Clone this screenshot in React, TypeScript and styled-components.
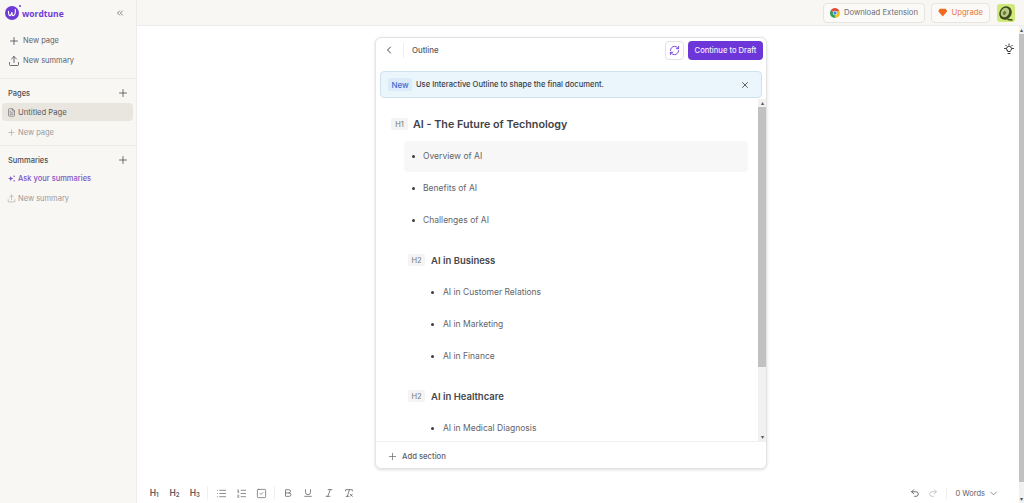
import { ChevronLeft, ChevronDown, ChevronsLeft, Plus, Upload, FileText, RefreshCw, X, Undo2, Redo2, List, ListOrdered, SquareCheck, Bold, Underline, Italic, RemoveFormatting } from "lucide-react";
import styled, { createGlobalStyle } from "styled-components";

const GlobalStyle = createGlobalStyle`
    html, body {
        margin: 0;
        height: 100%;
        overflow: hidden;
    }

    body {
        font-family: Inter, "Liberation Sans", sans-serif;
        background: #ffffff;
    }

    #root {
        height: 100%;
    }
`;

const outlineItems = [
    { kind: "li", level: 1, text: "Overview of AI", active: true },
    { kind: "li", level: 1, text: "Benefits of AI" },
    { kind: "li", level: 1, text: "Challenges of AI" },
    { kind: "h2", text: "AI in Business" },
    { kind: "li", level: 2, text: "AI in Customer Relations" },
    { kind: "li", level: 2, text: "AI in Marketing" },
    { kind: "li", level: 2, text: "AI in Finance" },
    { kind: "h2", text: "AI in Healthcare" },
    { kind: "li", level: 2, text: "AI in Medical Diagnosis" },
];

const App = () => {
    return (
        <Page>
            <GlobalStyle />
            <Sidebar>
                <LogoRow>
                    <Logo>
                        <svg width="14" height="14" viewBox="0 0 16 16">
                            <circle cx="8" cy="8" r="8" fill="#6f3bd8" />
                            <path d="M4 6c0 3 .6 5 1.700 5S7.500 9 8 7c-.2 2 .2 4 1.400 4 1.700 0 2.800-3 2.400-7" fill="none" stroke="#fff" strokeWidth="1.300" strokeLinecap="round" />
                        </svg>
                        <LogoDot />
                        <LogoText>wordtune</LogoText>
                    </Logo>
                    <ChevronsLeft size={10} color="#6b6b6b" />
                </LogoRow>

                <SideGroup>
                    <SideAction><Plus size={12} strokeWidth={1.5} />New page</SideAction>
                    <SideAction><Upload size={12} strokeWidth={1.5} />New summary</SideAction>
                </SideGroup>

                <SideSection>
                    <SideHeading>Pages<Plus size={12} strokeWidth={1.5} color="#444" /></SideHeading>
                    <PageItem><FileText size={9} strokeWidth={1.5} />Untitled Page</PageItem>
                    <SideLink><Plus size={9} strokeWidth={1.5} />New page</SideLink>
                </SideSection>

                <SideSection>
                    <SideHeading>Summaries<Plus size={12} strokeWidth={1.5} color="#444" /></SideHeading>
                    <AskLink>
                        <svg width="9" height="9" viewBox="0 0 12 12" fill="#7d55c7">
                            <path d="M5 2.500 6 5l2.500 1L6 7 5 9.500 4 7 1.500 6 4 5z" />
                            <circle cx="9.500" cy="3" r="1" />
                            <circle cx="9.500" cy="9" r="1" />
                        </svg>
                        Ask your summaries
                    </AskLink>
                    <SideLink><Upload size={9} strokeWidth={1.5} />New summary</SideLink>
                </SideSection>
            </Sidebar>

            <Main>
                <TopBar>
                    <ExtensionButton>
                        <ChromeIcon />
                        Download Extension
                    </ExtensionButton>
                    <UpgradeButton>
                        <svg width="10" height="9" viewBox="0 0 11 10">
                            <path d="M2 .5h7l1.700 3-5.200 6.100L.3 3.500z" fill="#ee6a1f" />
                        </svg>
                        Upgrade
                    </UpgradeButton>
                    <Avatar>
                        <svg width="16" height="16" viewBox="0 0 16 16">
                            <path d="M10 14.500 14 15" stroke="#3c4a1c" strokeWidth="1.500" strokeLinecap="round" />
                            <ellipse cx="7.500" cy="8" rx="6" ry="7" transform="rotate(30 7.500 8)" fill="#3c4a1c" />
                            <ellipse cx="7" cy="7.500" rx="4" ry="5" transform="rotate(30 7 7.500)" fill="#b9c98a" />
                            <ellipse cx="6.500" cy="8" rx="1.500" ry="2" transform="rotate(30 6.500 8)" fill="#6b7d2c" />
                        </svg>
                    </Avatar>
                </TopBar>

                <Workspace>
                    <Column>
                        <Editor>
                            <Canvas>
                                <Panel>
                                    <PanelHeader>
                                        <BackButton><ChevronLeft size={12} strokeWidth={2} /></BackButton>
                                        <PanelTitle>Outline</PanelTitle>
                                        <RefreshButton><RefreshCw size={11} strokeWidth={2} /></RefreshButton>
                                        <ContinueButton>Continue to Draft</ContinueButton>
                                    </PanelHeader>

                                    <Banner>
                                        <NewTag>New</NewTag>
                                        <BannerText>Use Interactive Outline to shape the final document.</BannerText>
                                        <X size={10} strokeWidth={2} color="#444" />
                                    </Banner>

                                    <OutlineScroll>
                                        <OutlineBody>
                                            <H1Row>
                                                <LevelTag>H1</LevelTag>
                                                <H1Text>AI - The Future of Technology</H1Text>
                                            </H1Row>
                                            {outlineItems.map((item) =>
                                                item.kind === "h2" ? (
                                                    <H2Row key={item.text}>
                                                        <LevelTag>H2</LevelTag>
                                                        <H2Text>{item.text}</H2Text>
                                                    </H2Row>
                                                ) : (
                                                    <Bullet key={item.text} $level={item.level ?? 1} $active={item.active}>
                                                        {item.text}
                                                    </Bullet>
                                                )
                                            )}
                                        </OutlineBody>
                                        <Scrollbar $width={8}>
                                            <ScrollArrow>▴</ScrollArrow>
                                            <ScrollTrack><ScrollThumb $height={260} /></ScrollTrack>
                                            <ScrollArrow>▾</ScrollArrow>
                                        </Scrollbar>
                                    </OutlineScroll>

                                    <PanelFooter>
                                        <Plus size={11} strokeWidth={1.5} />
                                        Add section
                                    </PanelFooter>
                                </Panel>
                            </Canvas>
                            <HintIcon>
                                <svg width="12" height="12" viewBox="0 0 24 24" fill="none" stroke="#333" strokeWidth="2" strokeLinecap="round">
                                    <path d="M8.500 15a5 5 0 1 1 7 0c-.7.700-1 1.300-1 2h-5c0-.7-.3-1.300-1-2z" />
                                    <path d="M10 21h4M12 2v2M3 11h2M19 11h2M5.500 4.500 7 6M18.500 4.500 17 6" />
                                </svg>
                            </HintIcon>
                        </Editor>

                        <BottomBar>
                            <ToolGroup>
                                <Tool><HeadingMark>H<sub>1</sub></HeadingMark></Tool>
                                <Tool><HeadingMark>H<sub>2</sub></HeadingMark></Tool>
                                <Tool><HeadingMark>H<sub>3</sub></HeadingMark></Tool>
                            </ToolGroup>
                            <ToolGroup>
                                <Tool><List size={11} strokeWidth={1.5} /></Tool>
                                <Tool><ListOrdered size={11} strokeWidth={1.5} /></Tool>
                                <Tool><SquareCheck size={11} strokeWidth={1.5} /></Tool>
                            </ToolGroup>
                            <ToolGroup>
                                <Tool><Bold size={10} strokeWidth={1.8} /></Tool>
                                <Tool><Underline size={10} strokeWidth={1.8} /></Tool>
                                <Tool><Italic size={10} strokeWidth={1.8} /></Tool>
                                <Tool><RemoveFormatting size={10} strokeWidth={1.8} /></Tool>
                            </ToolGroup>
                            <BottomRight>
                                <Undo2 size={10} strokeWidth={1.8} color="#444" />
                                <Redo2 size={10} strokeWidth={1.8} color="#b5b5b5" />
                                <WordCount>0 Words<ChevronDown size={11} strokeWidth={1.5} /></WordCount>
                            </BottomRight>
                        </BottomBar>
                    </Column>

                    <Scrollbar $width={5}>
                        <ScrollArrow>▴</ScrollArrow>
                        <ScrollTrack><ScrollThumb $height={448} /></ScrollTrack>
                        <ScrollArrow>▾</ScrollArrow>
                    </Scrollbar>
                </Workspace>
            </Main>
        </Page>
    );
};

const ChromeIcon = () => (
    <svg width="10" height="10" viewBox="0 0 20 20">
        <path d="M10 10 1.340 5A10 10 0 0 1 18.660 5z" fill="#e0493c" />
        <path d="M10 10 18.660 5A10 10 0 0 1 10 20z" fill="#f4c20d" />
        <path d="M10 10 10 20A10 10 0 0 1 1.340 5z" fill="#2f9e52" />
        <circle cx="10" cy="10" r="4.500" fill="#fff" />
        <circle cx="10" cy="10" r="3.400" fill="#4a86e8" />
    </svg>
);

const Page = styled.div`
    display: flex;
    height: 100%;
    color: #3a3d45;
`;

const Sidebar = styled.aside`
    width: 136px;
    flex-shrink: 0;
    background: #f8f7f4;
    border-right: 1px solid #ececea;
    font-size: 8px;
`;

const LogoRow = styled.div`
    height: 26px;
    display: flex;
    align-items: center;
    justify-content: space-between;
    padding: 0 11px 0 5px;
`;

const Logo = styled.div`
    position: relative;
    display: flex;
    align-items: center;
    gap: 3px;
`;

const LogoDot = styled.span`
    position: absolute;
    left: 14px;
    top: -1px;
    width: 2px;
    height: 2px;
    border-radius: 50%;
    background: #6f3bd8;
`;

const LogoText = styled.span`
    font-family: "Open Sans", sans-serif;
    font-weight: 700;
    font-size: 8.5px;
    color: #6f3bd8;
`;

const SideGroup = styled.div`
    display: flex;
    flex-direction: column;
    gap: 1px;
    padding: 5px 0 0 8px;
    height: 47px;
`;

const SideAction = styled.div`
    height: 19px;
    display: flex;
    align-items: center;
    gap: 3px;
    font-size: 7.5px;
    color: #5f6168;

    svg {
        color: #3a3d45;
    }
`;

const SideSection = styled.section`
    border-top: 1px solid #ececea;
    padding: 7px 2px 4px 2px;
`;

const SideHeading = styled.div`
    height: 14px;
    display: flex;
    align-items: center;
    justify-content: space-between;
    padding: 0 5px 0 6px;
    font-size: 7.5px;
    font-weight: 500;
    color: #4a4c52;
`;

const PageItem = styled.div`
    height: 18px;
    margin-top: 3px;
    padding: 0 5px;
    display: flex;
    align-items: center;
    gap: 2px;
    width: 131px;
    box-sizing: border-box;
    border-radius: 4px;
    background: #e9e6df;
    font-size: 7.7px;
    color: #55575d;
`;

const SideLink = styled.div`
    height: 18px;
    margin-top: 2px;
    padding: 0 5px;
    display: flex;
    align-items: center;
    gap: 2px;
    font-size: 7.5px;
    color: #9a9a9a;
`;

const AskLink = styled(SideLink)`
    font-weight: 500;
    color: #7d55c7;
`;

const Main = styled.main`
    flex: 1;
    min-width: 0;
    display: flex;
    flex-direction: column;
`;

const TopBar = styled.header`
    height: 26px;
    flex-shrink: 0;
    box-sizing: border-box;
    background: #f8f7f4;
    border-bottom: 1px solid #ececea;
    display: flex;
    align-items: center;
    justify-content: flex-end;
    padding-right: 9px;
`;

const TopButton = styled.button`
    height: 20px;
    box-sizing: border-box;
    display: flex;
    align-items: center;
    gap: 4px;
    border: 1px solid #e6e5e1;
    border-radius: 4px;
    background: #fbfaf8;
    font-family: inherit;
    font-size: 7.7px;
    white-space: nowrap;
    padding: 0 6px;
`;

const ExtensionButton = styled(TopButton)`
    width: 102px;
    color: #6b6d73;
    margin-right: 6px;
`;

const UpgradeButton = styled(TopButton)`
    width: 59px;
    color: #e8763a;
    margin-right: 7px;
`;

const Avatar = styled.div`
    width: 18px;
    height: 18px;
    border-radius: 3px;
    background: #cfe97a;
    display: flex;
    align-items: center;
    justify-content: center;
`;

const Workspace = styled.div`
    flex: 1;
    min-height: 0;
    display: flex;
`;

const Column = styled.div`
    flex: 1;
    min-width: 0;
    display: flex;
    flex-direction: column;
`;

const Editor = styled.div`
    flex: 1;
    min-height: 0;
    position: relative;
    display: flex;
`;

const Canvas = styled.div`
    flex: 1;
    padding: 11px 0 0 238px;
`;

const Panel = styled.div`
    width: 392px;
    height: 432px;
    box-sizing: border-box;
    display: flex;
    flex-direction: column;
    background: #fff;
    border: 1px solid #e4e4e4;
    border-radius: 6px;
    box-shadow: 0 1px 3px rgba(0, 0, 0, 0.14);
`;

const PanelHeader = styled.div`
    height: 24px;
    flex-shrink: 0;
    display: flex;
    align-items: center;
    padding: 0 3px 0 7px;
`;

const BackButton = styled.div`
    width: 20px;
    height: 15px;
    display: flex;
    align-items: center;
    border-right: 1px solid #eeeeee;
    color: #444;
`;

const PanelTitle = styled.span`
    flex: 1;
    margin-left: 8px;
    font-size: 7.8px;
    font-weight: 500;
    color: #55575d;
`;

const RefreshButton = styled.button`
    width: 19px;
    height: 19px;
    padding: 0;
    margin-right: 4px;
    display: flex;
    align-items: center;
    justify-content: center;
    background: #fff;
    border: 1px solid #e2e2e2;
    border-radius: 4px;
    color: #6f3bd8;
`;

const ContinueButton = styled.button`
    width: 75px;
    height: 19px;
    padding: 0;
    border: 0;
    border-radius: 4px;
    background: #6d36d9;
    color: #f3eefc;
    font-family: inherit;
    font-size: 7.6px;
    font-weight: 500;
`;

const Banner = styled.div`
    height: 27px;
    flex-shrink: 0;
    box-sizing: border-box;
    margin: 9px 4px 1px 4px;
    padding: 0 11px 0 7px;
    display: flex;
    align-items: center;
    background: #eaf5fc;
    border: 1px solid #cfe3ef;
    border-radius: 4px;
`;

const NewTag = styled.span`
    width: 24px;
    height: 13px;
    display: flex;
    align-items: center;
    justify-content: center;
    border-radius: 2px;
    background: #dcebfa;
    color: #3f6ccf;
    font-size: 8px;
    font-weight: 500;
`;

const BannerText = styled.span`
    flex: 1;
    margin-left: 4px;
    font-size: 7.6px;
    font-weight: 500;
    color: #3a3d45;
`;

const OutlineScroll = styled.div`
    flex: 1;
    min-height: 0;
    display: flex;
    overflow: hidden;
`;

const OutlineBody = styled.div`
    flex: 1;
    padding: 16px 10px 0 28px;
`;

const H1Row = styled.div`
    height: 18px;
    display: flex;
    align-items: center;
    gap: 5px;
    margin: 0 0 7.5px -13px;
`;

const LevelTag = styled.span`
    width: 17px;
    height: 12px;
    display: flex;
    align-items: center;
    justify-content: center;
    background: #f4f4f3;
    border-radius: 2px;
    font-size: 7.5px;
    color: #74767c;
`;

const H1Text = styled.span`
    font-size: 10.75px;
    font-weight: 600;
    color: #3f4148;
`;

const H2Row = styled.div`
    height: 24px;
    display: flex;
    align-items: center;
    gap: 6px;
    margin: 12.5px 0 4.5px 4px;
`;

const H2Text = styled.span`
    font-size: 9.5px;
    font-weight: 600;
    color: #45474e;
`;

const Bullet = styled.div<{ $level: number; $active?: boolean }>`
    position: relative;
    height: 31px;
    margin-bottom: 1px;
    display: flex;
    align-items: center;
    padding-left: ${(p) => (p.$level === 2 ? 39 : 19)}px;
    border-radius: 4px;
    background: ${(p) => (p.$active ? "#f7f7f7" : "transparent")};
    font-size: 8.5px;
    color: #63656c;

    &::before {
        content: "";
        position: absolute;
        left: ${(p) => (p.$level === 2 ? 27 : 8)}px;
        top: 14px;
        width: 3px;
        height: 3px;
        border-radius: 50%;
        background: #3a3d45;
    }
`;

const Scrollbar = styled.div<{ $width: number }>`
    width: ${(p) => p.$width}px;
    flex-shrink: 0;
    display: flex;
    flex-direction: column;
    background: #f1f1f1;
`;

const ScrollArrow = styled.span`
    height: 8px;
    font-size: 6px;
    line-height: 8px;
    text-align: center;
    color: #555;
`;

const ScrollTrack = styled.div`
    flex: 1;
    min-height: 0;
`;

const ScrollThumb = styled.div<{ $height: number }>`
    height: ${(p) => p.$height}px;
    background: #c1c1c1;
`;

const PanelFooter = styled.div`
    height: 27px;
    flex-shrink: 0;
    box-sizing: border-box;
    display: flex;
    align-items: center;
    gap: 4px;
    padding: 2px 0 0 11px;
    border-top: 1px solid #f0f0f0;
    font-size: 7.7px;
    font-weight: 500;
    color: #5f6168;
`;

const HintIcon = styled.div`
    position: absolute;
    top: 17px;
    right: 4px;
    display: flex;
`;

const BottomBar = styled.footer`
    height: 20px;
    flex-shrink: 0;
    display: flex;
    align-items: center;
    padding-left: 7px;
    color: #5a5c62;
`;

const ToolGroup = styled.div`
    display: flex;
    align-items: center;
    height: 14px;
    padding-right: 2px;
    margin-right: 3px;
    border-right: 1px solid #f0f0f0;

    &:nth-child(3) {
        border-right: 0;
    }
`;

const Tool = styled.span`
    width: 20.3px;
    display: flex;
    align-items: center;
    justify-content: center;
`;

const HeadingMark = styled.span`
    font-size: 8.5px;
    font-weight: 600;
    white-space: nowrap;

    sub {
        font-size: 6px;
        vertical-align: -1px;
    }
`;

const BottomRight = styled.div`
    margin-left: auto;
    display: flex;
    align-items: center;
    gap: 8px;
    padding-right: 20px;
`;

const WordCount = styled.div`
    display: flex;
    align-items: center;
    gap: 3px;
    padding-left: 8px;
    border-left: 1px solid #f0f0f0;
    font-size: 7.5px;
    color: #5f6168;
`;

export default App;
